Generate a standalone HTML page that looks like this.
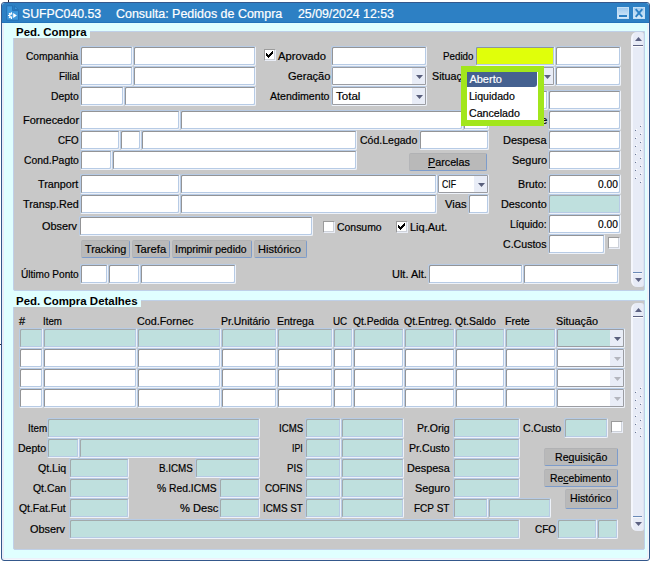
<!DOCTYPE html>
<html lang="pt-BR"><head><meta charset="utf-8"><title>SUFPC040.53 Consulta: Pedidos de Compra</title>
<style>
html,body{margin:0;padding:0;background:#fff;}
body{width:650px;height:562px;position:relative;overflow:hidden;font:11px/14px "Liberation Sans", Arial, sans-serif;color:#000;}
.win{position:absolute;left:1px;top:2px;width:647px;height:557px;border:1px solid #34588c;border-radius:3px 3px 3px 3px;background:#e0ffff;box-shadow:inset 2px 0 0 #e9edf7,inset -1px -1px 0 #f5f6fc,inset -2px -2px 0 #ecf1fa;overflow:hidden}
.tb{position:absolute;left:0;top:0;right:0;height:20px;box-sizing:border-box;background:#2d80c4;border-bottom:1px solid #2474ba}
.wb{position:absolute;top:7px;width:12px;height:12px;box-sizing:border-box;background:linear-gradient(#a3cbee,#d6eafa);border:1px solid #c4dff5}
.pn{position:absolute;box-sizing:border-box;background:#c8c8c8;border:1px solid #bfd0e8;border-radius:0 0 2px 2px}
.lg{position:absolute;background:#e0ffff}
.t{position:absolute;white-space:pre;transform-origin:0 0;font:11px/14px "Liberation Sans", Arial, sans-serif;-webkit-text-stroke:0.2px currentColor}
.t u{text-decoration:underline;text-underline-offset:1px}
.f{position:absolute;box-sizing:border-box;background:#fff;border:1px solid;border-color:#b7cbe5 #eef2f9 #eef2f9 #b7cbe5;border-radius:2px;box-shadow:inset 1px 1px 0 #939496,inset -1px -1px 0 #b7cbe5}
.f.ro{background:#bfe0de;box-shadow:inset 1px 1px 0 #a2aaac,inset -1px -1px 0 #b7cbe5}
.f.ro.cb{box-shadow:inset 0 0 0 1px #9b9da3}
.f.y{background:#e0ff0a}
.f.cb{box-shadow:inset 0 0 0 1px #9b9da3}
.cb .ar{position:absolute;right:1px;top:1px;bottom:1px;width:13px;background:#e9edf7;border-radius:0 1px 1px 0}
.cb .tri{position:absolute;right:3px;top:8px;width:7px;height:4px;background:#595f7c;clip-path:polygon(0 0,100% 0,50% 100%)}
.ck{position:absolute;width:12px;height:12px;box-sizing:border-box;background:#fff;border:1px solid;border-color:#9b9b9b #e9edf6 #e9edf6 #9b9b9b;box-shadow:inset -1px -1px 0 #cdd1d9}
.ck svg{position:absolute;left:-1px;top:-1px}
.bt{position:absolute;box-sizing:border-box;background:#b9b9b9;border:1px solid;border-color:#b1b2b4 #7d9ccb #7d9ccb #b4b5b8;border-radius:2px}
.sb{position:absolute;left:631px;width:13px;box-sizing:border-box;background:#e7ebf6;border-left:2px solid;border-left-color:#f4f6fc;border-right:1px solid #dde3f1;border-radius:6px 3px 3px 6px;}
.sb .up,.sb .dn{position:absolute;left:2px;width:7px;height:4px;background:#5b6182}
.sb .up{top:5px;clip-path:polygon(50% 0,100% 100%,0 100%)}
.sb .dn{bottom:5px;clip-path:polygon(0 0,100% 0,50% 100%)}
.sb .l1,.sb .l2{position:absolute;left:0;width:9px;height:1px}
.sb .l1{top:13px;width:10px;background:#5a6080;box-shadow:0 1px 0 #fff}
.sb .l2{bottom:14px;background:#6a8ab8;box-shadow:0 1px 0 #f6f8fc}
.sb .g{position:absolute;width:1px;height:1px;background:#6b7896;box-shadow:1px -1px 0 #fff}
.pop{position:absolute;left:461px;top:66px;width:83px;height:60px;box-sizing:border-box;border:6px solid #a2e61c;background:#fff}
.pop .s{position:absolute;left:0;top:0;width:70px;height:15px;background:#456190;border-radius:0 0 3px 0}
</style></head><body>

<div style="position:absolute;left:8px;top:0;width:1px;height:2px;background:#2a2a3a"></div>
<div style="position:absolute;left:0;top:344px;width:1px;height:1px;background:#2a2a3a"></div>
<div class="win">
</div>
<div class="tb" style="left:2px;top:3px;width:647px;right:auto;border-radius:3px 3px 0 0"></div>
<svg style="position:absolute;left:6px;top:5px" width="14" height="16" viewBox="0 0 14 16"><path d="M0.7 0.8 H6.6 V5.6 H12.6 V15.2 H0.7 Z" fill="#3c97db" stroke="#2570b4" stroke-width="1"/><path d="M8.4 0.9 L12.4 4.5 H8.4 Z" fill="#3c97db" stroke="#2570b4" stroke-width="0.9"/><g stroke="#fff" stroke-width="1.2" stroke-linecap="butt"><path d="M5.4 7.2 V9 M5.4 12 V13.9 M2 10.5 H3.8 M3 8.1 L4.2 9.3 M3 12.9 L4.2 11.7"/></g><path d="M6.2 8.2 A2.4 2.4 0 1 0 6.2 12.8 Z" fill="#fff"/><circle cx="5.3" cy="10.5" r="0.95" fill="#3c97db"/><path d="M7.2 8.1 L10.9 10.5 L7.2 12.9 Z" fill="#fff"/></svg>
<div class="wb" style="left:617px"><i style="position:absolute;left:1px;top:7px;width:8px;height:2px;background:#2d80c4"></i></div>
<div class="wb" style="left:633px"><svg style="position:absolute;left:-1px;top:-1px" width="12" height="12"><path d="M2.7 2.2 L9.3 9.8 M9.3 2.2 L2.7 9.8" stroke="#2d80c4" stroke-width="1.9"/></svg></div>
<div class="pn" style="left:13px;top:31px;width:632px;height:260px"></div>
<div class="lg" style="left:13px;top:24px;width:77px;height:14px"></div>
<div class="pn" style="left:13px;top:300px;width:632px;height:250px"></div>
<div class="lg" style="left:13px;top:291px;width:128px;height:16px"></div>
<div class="sb" style="top:32px;height:255px"><b class="up"></b><b class="dn"></b><span class="l1"></span><span class="l2"></span><i class="g" style="left:7px;top:94px"></i><i class="g" style="left:7px;top:102px"></i><i class="g" style="left:7px;top:110px"></i><i class="g" style="left:7px;top:118px"></i><i class="g" style="left:7px;top:126px"></i><i class="g" style="left:7px;top:134px"></i><i class="g" style="left:7px;top:142px"></i><i class="g" style="left:7px;top:150px"></i><i class="g" style="left:2px;top:98px"></i><i class="g" style="left:2px;top:106px"></i><i class="g" style="left:2px;top:114px"></i><i class="g" style="left:2px;top:122px"></i><i class="g" style="left:2px;top:130px"></i><i class="g" style="left:2px;top:138px"></i><i class="g" style="left:2px;top:146px"></i></div>
<div class="sb" style="top:303px;height:228px"><b class="up"></b><b class="dn"></b><span class="l1"></span><span class="l2"></span><i class="g" style="left:7px;top:85px"></i><i class="g" style="left:7px;top:93px"></i><i class="g" style="left:7px;top:101px"></i><i class="g" style="left:7px;top:109px"></i><i class="g" style="left:7px;top:117px"></i><i class="g" style="left:7px;top:125px"></i><i class="g" style="left:7px;top:133px"></i><i class="g" style="left:2px;top:89px"></i><i class="g" style="left:2px;top:97px"></i><i class="g" style="left:2px;top:105px"></i><i class="g" style="left:2px;top:113px"></i><i class="g" style="left:2px;top:121px"></i><i class="g" style="left:2px;top:129px"></i></div>
<div class="f " style="left:80px;top:46px;width:53px;height:20px"></div>
<div class="f " style="left:133px;top:46px;width:123px;height:20px"></div>
<div class="f " style="left:331px;top:46px;width:96px;height:20px"></div>
<div class="f y" style="left:475px;top:46px;width:80px;height:20px"></div>
<div class="f " style="left:555px;top:46px;width:66px;height:20px"></div>
<div class="f " style="left:80px;top:66px;width:53px;height:20px"></div>
<div class="f " style="left:133px;top:66px;width:123px;height:20px"></div>
<div class="f cb " style="left:331px;top:66px;width:96px;height:20px"><i class="ar"></i><b class="tri" style="background:#595f7c"></b></div>
<div class="f cb " style="left:475px;top:66px;width:80px;height:20px"><i class="ar"></i><b class="tri" style="background:#595f7c"></b></div>
<div class="f " style="left:555px;top:66px;width:66px;height:20px"></div>
<div class="f " style="left:80px;top:86px;width:44px;height:20px"></div>
<div class="f " style="left:124px;top:86px;width:132px;height:20px"></div>
<div class="f cb " style="left:331px;top:86px;width:96px;height:20px"><i class="ar"></i><b class="tri" style="background:#595f7c"></b></div>
<div class="f " style="left:475px;top:90px;width:73px;height:20px"></div>
<div class="f " style="left:548px;top:90px;width:73px;height:20px"></div>
<div class="f " style="left:80px;top:110px;width:100px;height:20px"></div>
<div class="f " style="left:180px;top:110px;width:283px;height:20px"></div>
<div class="f " style="left:463px;top:110px;width:26px;height:20px"></div>
<div class="f " style="left:548px;top:110px;width:73px;height:20px"></div>
<div class="f " style="left:80px;top:130px;width:40px;height:20px"></div>
<div class="f " style="left:120px;top:130px;width:21px;height:20px"></div>
<div class="f " style="left:141px;top:130px;width:216px;height:20px"></div>
<div class="f " style="left:419px;top:130px;width:70px;height:20px"></div>
<div class="f " style="left:548px;top:130px;width:73px;height:20px"></div>
<div class="f " style="left:80px;top:150px;width:32px;height:20px"></div>
<div class="f " style="left:112px;top:150px;width:245px;height:20px"></div>
<div class="f " style="left:548px;top:150px;width:73px;height:20px"></div>
<div class="f " style="left:80px;top:174px;width:100px;height:20px"></div>
<div class="f " style="left:180px;top:174px;width:257px;height:20px"></div>
<div class="f cb " style="left:437px;top:174px;width:52px;height:20px"><i class="ar"></i><b class="tri" style="background:#595f7c"></b></div>
<div class="f " style="left:548px;top:174px;width:73px;height:20px"></div>
<div class="f " style="left:80px;top:194px;width:100px;height:20px"></div>
<div class="f " style="left:180px;top:194px;width:257px;height:20px"></div>
<div class="f " style="left:468px;top:194px;width:21px;height:20px"></div>
<div class="f ro" style="left:548px;top:194px;width:73px;height:20px"></div>
<div class="f " style="left:79px;top:216px;width:234px;height:20px"></div>
<div class="f " style="left:548px;top:214px;width:73px;height:20px"></div>
<div class="f " style="left:548px;top:234px;width:57px;height:20px"></div>
<div class="f " style="left:80px;top:264px;width:28px;height:20px"></div>
<div class="f " style="left:108px;top:264px;width:32px;height:20px"></div>
<div class="f " style="left:140px;top:264px;width:96px;height:20px"></div>
<div class="f " style="left:428px;top:264px;width:95px;height:20px"></div>
<div class="f " style="left:523px;top:264px;width:96px;height:20px"></div>
<div class="ck" style="left:264px;top:49px"><svg width="12" height="12" viewBox="0 0 12 12" shape-rendering="crispEdges"><path d="M2 4h1v3h-1zM3 5h1v3h-1zM4 6h1v3h-1zM5 5h1v3h-1zM6 4h1v3h-1zM7 3h1v3h-1zM8 2h1v3h-1z" fill="#000"/></svg></div>
<div class="ck" style="left:323px;top:221px"></div>
<div class="ck" style="left:396px;top:221px"><svg width="12" height="12" viewBox="0 0 12 12" shape-rendering="crispEdges"><path d="M2 4h1v3h-1zM3 5h1v3h-1zM4 6h1v3h-1zM5 5h1v3h-1zM6 4h1v3h-1zM7 3h1v3h-1zM8 2h1v3h-1z" fill="#000"/></svg></div>
<div class="ck" style="left:608px;top:237px"></div>
<div class="bt" style="left:81px;top:240px;width:49px;height:18px"></div>
<div class="bt" style="left:132px;top:240px;width:38px;height:18px"></div>
<div class="bt" style="left:172px;top:240px;width:80px;height:18px"></div>
<div class="bt" style="left:254px;top:240px;width:53px;height:18px"></div>
<div class="bt" style="left:409px;top:153px;width:78px;height:18px"></div>
<div class="f ro" style="left:19px;top:328px;width:24px;height:20px"></div>
<div class="f ro" style="left:43px;top:328px;width:94px;height:20px"></div>
<div class="f ro" style="left:137px;top:328px;width:84px;height:20px"></div>
<div class="f ro" style="left:221px;top:328px;width:56px;height:20px"></div>
<div class="f ro" style="left:277px;top:328px;width:56px;height:20px"></div>
<div class="f ro" style="left:333px;top:328px;width:20px;height:20px"></div>
<div class="f ro" style="left:353px;top:328px;width:51px;height:20px"></div>
<div class="f ro" style="left:404px;top:328px;width:51px;height:20px"></div>
<div class="f ro" style="left:455px;top:328px;width:50px;height:20px"></div>
<div class="f ro" style="left:505px;top:328px;width:51px;height:20px"></div>
<div class="f cb ro" style="left:556px;top:328px;width:69px;height:20px"><i class="ar"></i><b class="tri" style="background:#595f7c"></b></div>
<div class="f " style="left:19px;top:348px;width:24px;height:20px"></div>
<div class="f " style="left:43px;top:348px;width:94px;height:20px"></div>
<div class="f " style="left:137px;top:348px;width:84px;height:20px"></div>
<div class="f " style="left:221px;top:348px;width:56px;height:20px"></div>
<div class="f " style="left:277px;top:348px;width:56px;height:20px"></div>
<div class="f " style="left:333px;top:348px;width:20px;height:20px"></div>
<div class="f " style="left:353px;top:348px;width:51px;height:20px"></div>
<div class="f " style="left:404px;top:348px;width:51px;height:20px"></div>
<div class="f " style="left:455px;top:348px;width:50px;height:20px"></div>
<div class="f " style="left:505px;top:348px;width:51px;height:20px"></div>
<div class="f cb " style="left:556px;top:348px;width:69px;height:20px"><i class="ar"></i><b class="tri" style="background:#b4b6be"></b></div>
<div class="f " style="left:19px;top:368px;width:24px;height:20px"></div>
<div class="f " style="left:43px;top:368px;width:94px;height:20px"></div>
<div class="f " style="left:137px;top:368px;width:84px;height:20px"></div>
<div class="f " style="left:221px;top:368px;width:56px;height:20px"></div>
<div class="f " style="left:277px;top:368px;width:56px;height:20px"></div>
<div class="f " style="left:333px;top:368px;width:20px;height:20px"></div>
<div class="f " style="left:353px;top:368px;width:51px;height:20px"></div>
<div class="f " style="left:404px;top:368px;width:51px;height:20px"></div>
<div class="f " style="left:455px;top:368px;width:50px;height:20px"></div>
<div class="f " style="left:505px;top:368px;width:51px;height:20px"></div>
<div class="f cb " style="left:556px;top:368px;width:69px;height:20px"><i class="ar"></i><b class="tri" style="background:#b4b6be"></b></div>
<div class="f " style="left:19px;top:388px;width:24px;height:20px"></div>
<div class="f " style="left:43px;top:388px;width:94px;height:20px"></div>
<div class="f " style="left:137px;top:388px;width:84px;height:20px"></div>
<div class="f " style="left:221px;top:388px;width:56px;height:20px"></div>
<div class="f " style="left:277px;top:388px;width:56px;height:20px"></div>
<div class="f " style="left:333px;top:388px;width:20px;height:20px"></div>
<div class="f " style="left:353px;top:388px;width:51px;height:20px"></div>
<div class="f " style="left:404px;top:388px;width:51px;height:20px"></div>
<div class="f " style="left:455px;top:388px;width:50px;height:20px"></div>
<div class="f " style="left:505px;top:388px;width:51px;height:20px"></div>
<div class="f cb " style="left:556px;top:388px;width:69px;height:20px"><i class="ar"></i><b class="tri" style="background:#b4b6be"></b></div>
<div class="f ro" style="left:47px;top:418px;width:213px;height:20px"></div>
<div class="f ro" style="left:47px;top:438px;width:32px;height:20px"></div>
<div class="f ro" style="left:79px;top:438px;width:181px;height:20px"></div>
<div class="f ro" style="left:69px;top:458px;width:60px;height:20px"></div>
<div class="f ro" style="left:69px;top:478px;width:60px;height:20px"></div>
<div class="f ro" style="left:69px;top:498px;width:60px;height:20px"></div>
<div class="f ro" style="left:195px;top:458px;width:65px;height:20px"></div>
<div class="f ro" style="left:219px;top:478px;width:41px;height:20px"></div>
<div class="f ro" style="left:219px;top:498px;width:41px;height:20px"></div>
<div class="f ro" style="left:69px;top:519px;width:451px;height:20px"></div>
<div class="f ro" style="left:305px;top:418px;width:36px;height:20px"></div>
<div class="f ro" style="left:341px;top:418px;width:63px;height:20px"></div>
<div class="f ro" style="left:305px;top:438px;width:36px;height:20px"></div>
<div class="f ro" style="left:341px;top:438px;width:63px;height:20px"></div>
<div class="f ro" style="left:305px;top:458px;width:36px;height:20px"></div>
<div class="f ro" style="left:341px;top:458px;width:63px;height:20px"></div>
<div class="f ro" style="left:305px;top:478px;width:36px;height:20px"></div>
<div class="f ro" style="left:341px;top:478px;width:63px;height:20px"></div>
<div class="f ro" style="left:305px;top:498px;width:36px;height:20px"></div>
<div class="f ro" style="left:341px;top:498px;width:63px;height:20px"></div>
<div class="f ro" style="left:453px;top:418px;width:67px;height:20px"></div>
<div class="f ro" style="left:453px;top:438px;width:67px;height:20px"></div>
<div class="f ro" style="left:453px;top:458px;width:67px;height:20px"></div>
<div class="f ro" style="left:453px;top:478px;width:67px;height:20px"></div>
<div class="f ro" style="left:453px;top:498px;width:35px;height:20px"></div>
<div class="f ro" style="left:488px;top:498px;width:63px;height:20px"></div>
<div class="f ro" style="left:564px;top:418px;width:44px;height:20px"></div>
<div class="ck" style="left:611px;top:421px"></div>
<div class="f ro" style="left:557px;top:519px;width:40px;height:20px"></div>
<div class="f ro" style="left:597px;top:519px;width:21px;height:20px"></div>
<div class="bt" style="left:544px;top:448px;width:74px;height:18px"></div>
<div class="bt" style="left:544px;top:469px;width:74px;height:18px"></div>
<div class="bt" style="left:565px;top:489px;width:53px;height:20px"></div>
<span class="t" style="left:22.09px;top:7px;transform:scaleX(1.0230);font-size:12px;color:#fff;">SUFPC040.53</span>
<span class="t" style="left:116.18px;top:7px;transform:scaleX(1.0385);font-size:12px;color:#fff;">Consulta: Pedidos de Compra</span>
<span class="t" style="left:297.79px;top:7px;transform:scaleX(1.0270);font-size:12px;color:#fff;">25/09/2024 12:53</span>
<span class="t" style="left:15.92px;top:25px;transform:scaleX(1.0394);font-weight:bold;-webkit-text-stroke:0;">Ped. Compra</span>
<span class="t" style="left:15.92px;top:294px;transform:scaleX(1.0416);font-weight:bold;-webkit-text-stroke:0;">Ped. Compra Detalhes</span>
<span class="t" style="left:26.24px;top:49px;transform:scaleX(0.9274);">Companhia</span>
<span class="t" style="left:58.50px;top:69px;transform:scaleX(0.9048);">Filial</span>
<span class="t" style="left:51.06px;top:89px;transform:scaleX(0.9429);">Depto</span>
<span class="t" style="left:22.60px;top:113px;transform:scaleX(0.9964);">Fornecedor</span>
<span class="t" style="left:57.96px;top:133px;transform:scaleX(0.8899);">CFO</span>
<span class="t" style="left:23.93px;top:153px;transform:scaleX(0.9432);">Cond.Pagto</span>
<span class="t" style="left:38.15px;top:177px;transform:scaleX(0.9805);">Tranport</span>
<span class="t" style="left:23.36px;top:197px;transform:scaleX(0.9786);">Transp.Red</span>
<span class="t" style="left:41.91px;top:219px;transform:scaleX(0.9886);">Observ</span>
<span class="t" style="left:20.71px;top:267px;transform:scaleX(0.9166);">Último Ponto</span>
<span class="t" style="left:278.00px;top:49px;transform:scaleX(1.0182);">Aprovado</span>
<span class="t" style="left:287.50px;top:69px;transform:scaleX(1.0036);">Geração</span>
<span class="t" style="left:270.00px;top:89px;transform:scaleX(0.9633);">Atendimento</span>
<span class="t" style="left:335.74px;top:89px;transform:scaleX(1.0517);">Total</span>
<span class="t" style="left:443.01px;top:49px;transform:scaleX(0.8885);">Pedido</span>
<span class="t" style="left:431.91px;top:69px;transform:scaleX(0.9725);">Situação</span>
<span class="t" style="left:521.61px;top:113px;transform:scaleX(0.9897);">Frete</span>
<span class="t" style="left:360.12px;top:133px;transform:scaleX(0.9559);">Cód.Legado</span>
<span class="t" style="left:503.00px;top:133px;transform:scaleX(1.0024);">Despesa</span>
<span class="t" style="left:511.90px;top:153px;transform:scaleX(0.9913);">Seguro</span>
<span class="t" style="left:517.83px;top:177px;transform:scaleX(0.9745);">Bruto:</span>
<span class="t" style="left:501.42px;top:197px;transform:scaleX(0.9822);">Desconto</span>
<span class="t" style="left:509.67px;top:217px;transform:scaleX(0.9342);">Líquido:</span>
<span class="t" style="left:502.92px;top:237px;transform:scaleX(0.9627);">C.Custos</span>
<span class="t" style="left:427.62px;top:155px;transform:scaleX(0.9783);"><u>P</u>arcelas</span>
<span class="t" style="left:442.21px;top:177px;transform:scaleX(0.7881);">CIF</span>
<span class="t" style="left:444.60px;top:197px;transform:scaleX(1.0217);">Vias</span>
<span class="t" style="left:337.33px;top:220px;transform:scaleX(0.9478);">Consumo</span>
<span class="t" style="left:409.60px;top:220px;transform:scaleX(0.9986);">Liq.Aut.</span>
<span class="t" style="left:598.18px;top:177px;transform:scaleX(0.9250);">0.00</span>
<span class="t" style="left:598.18px;top:217px;transform:scaleX(0.9250);">0.00</span>
<span class="t" style="left:391.65px;top:267px;transform:scaleX(0.9985);">Ult. Alt.</span>
<span class="t" style="left:85.15px;top:242px;transform:scaleX(0.9865);">Tracking</span>
<span class="t" style="left:135.35px;top:242px;transform:scaleX(1.0182);">Tarefa</span>
<span class="t" style="left:175.46px;top:242px;transform:scaleX(0.9428);">Imprimir pedido</span>
<span class="t" style="left:258.00px;top:242px;transform:scaleX(1.0036);">Histórico</span>
<span class="t" style="left:19.00px;top:314px;transform:scaleX(1.0000);">#</span>
<span class="t" style="left:42.92px;top:314px;transform:scaleX(0.8810);">Item</span>
<span class="t" style="left:136.91px;top:314px;transform:scaleX(0.9797);">Cod.Fornec</span>
<span class="t" style="left:221.25px;top:314px;transform:scaleX(0.9520);">Pr.Unitário</span>
<span class="t" style="left:277.45px;top:314px;transform:scaleX(0.9547);">Entrega</span>
<span class="t" style="left:332.73px;top:314px;transform:scaleX(0.8949);">UC</span>
<span class="t" style="left:352.93px;top:314px;transform:scaleX(0.9320);">Qt.Pedida</span>
<span class="t" style="left:403.92px;top:314px;transform:scaleX(0.9559);">Qt.Entreg.</span>
<span class="t" style="left:455.12px;top:314px;transform:scaleX(0.9533);">Qt.Saldo</span>
<span class="t" style="left:505.44px;top:314px;transform:scaleX(0.9649);">Frete</span>
<span class="t" style="left:555.91px;top:314px;transform:scaleX(0.9820);">Situação</span>
<span class="t" style="left:27.51px;top:421px;transform:scaleX(0.8911);">Item</span>
<span class="t" style="left:18.44px;top:441px;transform:scaleX(0.9571);">Depto</span>
<span class="t" style="left:37.92px;top:461px;transform:scaleX(0.9628);">Qt.Liq</span>
<span class="t" style="left:33.13px;top:481px;transform:scaleX(0.9481);">Qt.Can</span>
<span class="t" style="left:18.93px;top:501px;transform:scaleX(0.9429);">Qt.Fat.Fut</span>
<span class="t" style="left:29.91px;top:522px;transform:scaleX(0.9886);">Observ</span>
<span class="t" style="left:158.71px;top:461px;transform:scaleX(0.8932);">B.ICMS</span>
<span class="t" style="left:156.93px;top:481px;transform:scaleX(0.9376);">% Red.ICMS</span>
<span class="t" style="left:180.09px;top:501px;transform:scaleX(1.0108);">% Desc</span>
<span class="t" style="left:278.52px;top:421px;transform:scaleX(0.8769);">ICMS</span>
<span class="t" style="left:291.81px;top:441px;transform:scaleX(0.7913);">IPI</span>
<span class="t" style="left:286.52px;top:461px;transform:scaleX(0.8800);">PIS</span>
<span class="t" style="left:264.95px;top:481px;transform:scaleX(0.8963);">COFINS</span>
<span class="t" style="left:262.51px;top:501px;transform:scaleX(0.8925);">ICMS ST</span>
<span class="t" style="left:417.45px;top:421px;transform:scaleX(0.9538);">Pr.Orig</span>
<span class="t" style="left:409.43px;top:441px;transform:scaleX(0.9669);">Pr.Custo</span>
<span class="t" style="left:407.42px;top:461px;transform:scaleX(0.9835);">Despesa</span>
<span class="t" style="left:414.91px;top:481px;transform:scaleX(0.9855);">Seguro</span>
<span class="t" style="left:414.49px;top:501px;transform:scaleX(0.9113);">FCP ST</span>
<span class="t" style="left:522.92px;top:421px;transform:scaleX(0.9600);">C.Custo</span>
<span class="t" style="left:534.95px;top:522px;transform:scaleX(0.9079);">CFO</span>
<span class="t" style="left:554.74px;top:450px;transform:scaleX(0.9623);">Re<u>q</u>uisição</span>
<span class="t" style="left:550.36px;top:471px;transform:scaleX(0.9423);">Re<u>c</u>ebimento</span>
<span class="t" style="left:570.44px;top:491px;transform:scaleX(0.9648);">Histórico</span>
<div class="pop"><div class="s"></div></div>
<span class="t" style="left:469.40px;top:72px;transform:scaleX(1.0000);color:#fff;">Aberto</span>
<span class="t" style="left:469.04px;top:89px;transform:scaleX(0.9600);">Liquidado</span>
<span class="t" style="left:468.92px;top:106px;transform:scaleX(0.9662);">Cancelado</span>
</body></html>
